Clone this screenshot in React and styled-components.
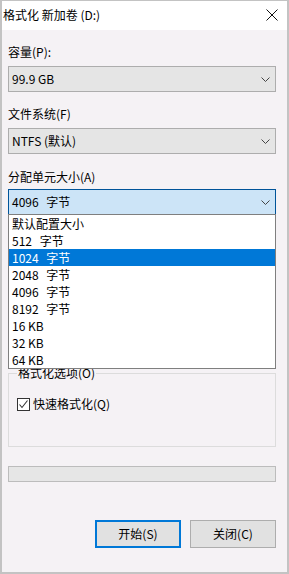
import styled, { createGlobalStyle } from "styled-components"

const GlobalStyle = createGlobalStyle`
  html, body {
    margin: 0;
    padding: 0;
    background: #ffffff;
  }
  body {
    font-family: "Noto Sans CJK SC", "Noto Sans", sans-serif;
    font-size: 12px;
    color: #000;
  }
  * {
    box-sizing: border-box;
  }
`

const sizes = [
  "默认配置大小",
  "512 字节",
  "1024 字节",
  "2048 字节",
  "4096 字节",
  "8192 字节",
  "16 KB",
  "32 KB",
  "64 KB",
]

// the "字节" entries are drawn with a wider space in the original dialog
const wide = (s) => s.endsWith("字节")

function Chevron() {
  return (
    <svg width="9" height="5" viewBox="0 0 9 5">
      <path d="M0.5 0.5 L4.5 4.5 L8.5 0.5" fill="none" stroke="#444" strokeWidth="1" />
    </svg>
  )
}

function Combo({ value, $focused, children }) {
  return (
    <ComboWrap>
      <ComboBox $focused={$focused}>
        <Value $wide={wide(value)}>{value}</Value>
        <Chevron />
      </ComboBox>
      {children}
    </ComboWrap>
  )
}

export default function App() {
  return (
    <>
      <GlobalStyle />
      <Window>
        <TitleBar>
          <span>格式化 新加卷 (D:)</span>
          <svg width="12" height="12" viewBox="0 0 12 12">
            <path d="M0.5 0.5 L11.5 11.5 M11.5 0.5 L0.5 11.5" stroke="#111" strokeWidth="1" />
          </svg>
        </TitleBar>

        <Body>
          <Label>容量(P):</Label>
          <Combo value="99.9 GB" />

          <Label $top={14}>文件系统(F)</Label>
          <Combo value="NTFS (默认)" />

          <Label $top={15} $bottom={4}>分配单元大小(A)</Label>
          <Combo value="4096 字节" $focused>
            <List>
              {sizes.map((s) => (
                <Item key={s} $selected={s === "1024 字节"} $wide={wide(s)}>
                  {s}
                </Item>
              ))}
            </List>
          </Combo>

          <Group>
            <Legend>格式化选项(O)</Legend>
            <CheckRow>
              <CheckBox>
                <svg width="11" height="11" viewBox="0 0 11 11">
                  <path d="M1.5 5.5 L4 8.5 L9.5 1.5" fill="none" stroke="#333" strokeWidth="1.1" />
                </svg>
              </CheckBox>
              <span>快速格式化(Q)</span>
            </CheckRow>
          </Group>

          <Progress />

          <Buttons>
            <Button $primary>开始(S)</Button>
            <Button>关闭(C)</Button>
          </Buttons>
        </Body>
      </Window>
    </>
  )
}

const Window = styled.div`
  width: 289px;
  height: 574px;
  border: 2px solid #c3c3c3;
  border-top-width: 1px;
  display: flex;
  flex-direction: column;
  overflow: hidden;
`

const TitleBar = styled.div`
  height: 29px;
  flex-shrink: 0;
  background: #ffffff;
  display: flex;
  align-items: center;
  justify-content: space-between;
  padding: 0 9px 2px 1px;
  line-height: 16px;
`

const Body = styled.div`
  flex: 1;
  background: #f5f2f5;
  padding: 14px 11px 0 6px;
  display: flex;
  flex-direction: column;
`

const Label = styled.div`
  line-height: 16px;
  height: 16px;
  margin-top: ${(p) => p.$top || 0}px;
  margin-bottom: ${(p) => (p.$bottom != null ? p.$bottom : 6)}px;
`

const ComboWrap = styled.div`
  position: relative;
`

const ComboBox = styled.div`
  height: 26px;
  display: flex;
  align-items: center;
  justify-content: space-between;
  padding: 0 5px 0 3px;
  border: 1px solid ${(p) => (p.$focused ? "#005499" : "#adadad")};
  background: ${(p) => (p.$focused ? "#cce4f7" : "#e5e5e5")};
  line-height: 16px;
`

const Value = styled.span`
  word-spacing: ${(p) => (p.$wide ? "5px" : "0")};
`

const List = styled.div`
  position: absolute;
  left: 0;
  right: 0;
  top: calc(100% - 1px);
  border: 1px solid #7f7f7f;
  background: #ffffff;
  z-index: 10;
`

const Item = styled.div`
  height: 17px;
  line-height: 17px;
  padding-left: 3px;
  word-spacing: ${(p) => (p.$wide ? "5px" : "0")};
  background: ${(p) => (p.$selected ? "#0078d7" : "transparent")};
  color: ${(p) => (p.$selected ? "#ffffff" : "#000000")};
`

const Group = styled.fieldset`
  margin: 150px 0 0 0;
  padding: 0 0 34px 8px;
  border: 1px solid #dcdcdc;
  min-width: 0;
`

const Legend = styled.legend`
  padding: 0 1px;
  line-height: 16px;
`

const CheckRow = styled.div`
  margin-top: 15px;
  display: flex;
  align-items: center;
  gap: 3px;
  line-height: 16px;
`

const CheckBox = styled.div`
  width: 13px;
  height: 13px;
  border: 1px solid #333;
  background: #ffffff;
  display: flex;
  align-items: center;
  justify-content: center;
`

const Progress = styled.div`
  margin-top: 19px;
  height: 16px;
  border: 1px solid #bcbcbc;
  background: #e6e6e6;
`

const Buttons = styled.div`
  margin-top: 38px;
  display: flex;
  justify-content: flex-end;
  gap: 9px;
`

const Button = styled.div`
  width: 86px;
  height: 28px;
  display: flex;
  align-items: center;
  justify-content: center;
  background: #e1e1e1;
  border: ${(p) => (p.$primary ? "2px solid #0078d7" : "1px solid #adadad")};
  line-height: 16px;
`
